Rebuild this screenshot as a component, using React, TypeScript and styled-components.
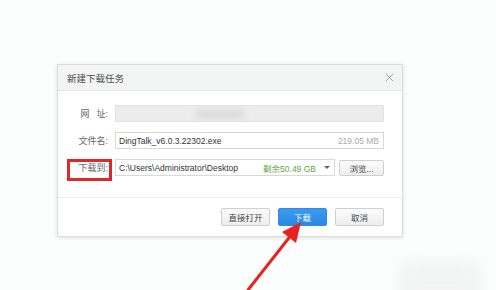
import React from 'react';
import styled, { createGlobalStyle } from 'styled-components';

const GlobalStyle = createGlobalStyle`
  html, body {
    margin: 0;
    padding: 0;
    background: #fcfdfd;
  }
  body {
    font-family: "Liberation Sans", "Noto Sans CJK SC", sans-serif;
  }
`;

const Page = styled.div`
  position: relative;
  width: 496px;
  height: 290px;
  overflow: hidden;
  padding: 64px 0 0 57px;
  box-sizing: border-box;
`;

const Dialog = styled.div`
  width: 346px;
  height: 173px;
  box-sizing: border-box;
  background: #fff;
  border: 1px solid #dcdcdc;
  box-shadow: 0 1px 4px rgba(0, 0, 0, 0.12);
  display: flex;
  flex-direction: column;
`;

const TitleBar = styled.div`
  height: 25px;
  flex: none;
  background: #f3f4f4;
  border-bottom: 1px solid #e6e6e6;
  display: flex;
  align-items: center;
  justify-content: space-between;
  padding: 0 8px 0 9px;
  font-size: 9.5px;
  color: #4a4a4a;
`;

const Close = styled.svg`
  width: 9px;
  height: 9px;
`;

const Body = styled.div`
  flex: 1;
  padding: 14px 18px 0 0;
  display: flex;
  flex-direction: column;
  gap: 10px;
`;

const Row = styled.div`
  display: flex;
  align-items: center;
  height: 17px;
`;

const Label = styled.div<{ $marked?: boolean }>`
  position: relative;
  width: 50px;
  flex: none;
  margin-right: 7px;
  text-align: right;
  font-size: 9px;
  color: #666;

  ${(p) =>
    p.$marked &&
    `
    &::after {
      content: '';
      position: absolute;
      left: 9px;
      right: -4px;
      top: -2px;
      bottom: -7px;
      border: 3px solid #e0282a;
    }
  `}
`;

const Gap = styled.span`
  display: inline-block;
  width: 7px;
`;

const Field = styled.div<{ $blank?: boolean }>`
  flex: 1;
  height: 100%;
  box-sizing: border-box;
  border: 1px solid ${(p) => (p.$blank ? '#e2e2e2' : '#d8d8d8')};
  background: ${(p) => (p.$blank ? '#ececec' : '#fff')};
  display: flex;
  align-items: center;
  justify-content: space-between;
  padding: 0 4px 0 3px;
  font-size: 8.5px;
  color: #333;
  position: relative;
  overflow: hidden;
`;

const Blur = styled.div`
  position: absolute;
  left: 80px;
  top: 4px;
  width: 48px;
  height: 8px;
  border-radius: 4px;
  background: #d9d9d9;
  filter: blur(3px);
`;

const Muted = styled.span`
  color: #aaa;
`;

const Free = styled.span`
  display: flex;
  align-items: center;
  gap: 8px;
  color: #5aa83a;
`;

const Caret = styled.span`
  width: 0;
  height: 0;
  border-left: 3px solid transparent;
  border-right: 3px solid transparent;
  border-top: 3px solid #666;
`;

const Button = styled.button<{ $primary?: boolean; $small?: boolean }>`
  width: ${(p) => (p.$small ? '45px' : '49px')};
  height: ${(p) => (p.$small ? '16px' : '18px')};
  margin-left: ${(p) => (p.$small ? '4px' : '0')};
  box-sizing: border-box;
  padding: 0;
  border-radius: 2px;
  border: 1px solid ${(p) => (p.$primary ? '#2f8ae6' : '#cfcfcf')};
  background: ${(p) =>
    p.$primary ? 'linear-gradient(#3d9af0, #2a88e6)' : 'linear-gradient(#fbfbfb, #eeeeee)'};
  color: ${(p) => (p.$primary ? '#fff' : '#444')};
  font-family: inherit;
  font-size: 8.5px;
  flex: none;
`;

const Footer = styled.div`
  height: 39px;
  flex: none;
  border-top: 1px solid #ececec;
  display: flex;
  align-items: center;
  justify-content: flex-end;
  gap: 8px;
  padding: 0 18px 0 0;
  box-sizing: border-box;
`;

const Arrow = styled.svg`
  position: absolute;
  left: 240px;
  top: 218px;
  width: 70px;
  height: 72px;
`;

const Smudge = styled.div`
  position: absolute;
  left: 400px;
  top: 262px;
  width: 80px;
  height: 40px;
  background: #ececec;
  filter: blur(8px);
  opacity: 0.6;
`;

export default function App() {
  return (
    <>
      <GlobalStyle />
      <Page>
        <Dialog>
          <TitleBar>
            <span>新建下载任务</span>
            <Close viewBox="0 0 10 10">
              <path d="M1 1L9 9M9 1L1 9" stroke="#9a9a9a" strokeWidth="1" />
            </Close>
          </TitleBar>
          <Body>
            <Row>
              <Label>
                网<Gap />址:
              </Label>
              <Field $blank>
                <Blur />
              </Field>
            </Row>
            <Row>
              <Label>文件名:</Label>
              <Field>
                <span>DingTalk_v6.0.3.22302.exe</span>
                <Muted>219.05 MB</Muted>
              </Field>
            </Row>
            <Row>
              <Label $marked>下载到:</Label>
              <Field>
                <span>C:\Users\Administrator\Desktop</span>
                <Free>
                  剩余50.49 GB
                  <Caret />
                </Free>
              </Field>
              <Button $small>浏览...</Button>
            </Row>
          </Body>
          <Footer>
            <Button>直接打开</Button>
            <Button $primary>下载</Button>
            <Button>取消</Button>
          </Footer>
        </Dialog>
        <Arrow viewBox="0 0 70 72">
          <path d="M8 72L52 16" stroke="#e8231f" strokeWidth="3" strokeLinecap="round" />
          <path d="M61 4L42 14L56 25Z" fill="#e8231f" />
        </Arrow>
        <Smudge />
      </Page>
    </>
  );
}
